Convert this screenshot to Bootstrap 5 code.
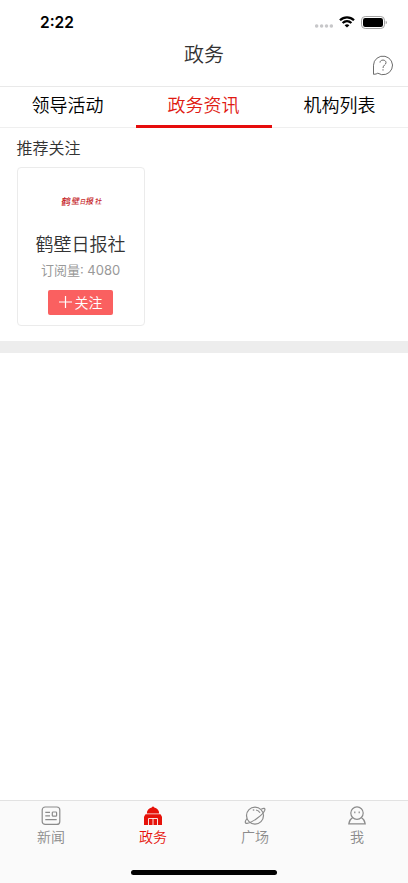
<!DOCTYPE html>
<html lang="zh-CN">
<head>
<meta charset="utf-8">
<meta name="viewport" content="width=device-width, initial-scale=1">
<title>政务</title>
<link href="https://cdn.jsdelivr.net/npm/bootstrap@5.3.0/dist/css/bootstrap.min.css" rel="stylesheet">
<style>
body{font-family:Inter,"Noto Sans CJK SC",sans-serif;font-weight:350;color:#333;background:#fff;height:883px;overflow:hidden}
.status-bar{height:44px;padding:0 21px 0 40px}
.clock{font-size:15.5px;font-weight:600;color:#000;line-height:44px;padding-top:1px}
.status-icons{gap:6px}
.top-bar{height:43px;border-bottom:1px solid #e9e9e9}
.page-title{font-size:20px;line-height:22px;padding-left:20px;font-weight:350}
.side-slot{width:20px;margin-right:15px}
.topic-tabs{height:41px;border-bottom:1px solid #efefef}
.topic-tabs .nav-link{height:41px;padding:0 1px 0 0;border-radius:0;font-size:18px;line-height:37px;color:#000;border-bottom:3px solid transparent}
.topic-tabs .nav-link.active{color:#df1a12;border-color:#e60c0c}
.follow-area{height:225px;padding:0 16.5px;border-bottom:12px solid #ededed}
.follow-title{font-size:16px;line-height:40px;height:39px;font-weight:350}
.press-card{width:128px;height:159px;border:1px solid #ebebeb;border-radius:4px}
.press-logo{height:67px}
.press-name{font-size:18px;line-height:20px;height:18px}
.press-count{font-size:13px;line-height:17px;height:15px;color:#999;font-weight:400;margin-top:9px}
.btn-follow{width:65px;height:25px;margin-top:13px;border-radius:2px;background:#fa6060;color:#fff;font-size:14px;font-weight:350;line-height:14px;gap:3px}
.bottom-nav{height:83px;background:#fafafa;border-top:1px solid #e2e2e2}
.bottom-nav .nav-link{padding:4px 0 0;color:#8b8b8b;font-size:14px;line-height:21px}
.bottom-nav .nav-link.active{color:#e6120a}
.home-bar{width:146px;height:5px;background:#000;margin-bottom:8px}
</style>
<script src="https://cdn.jsdelivr.net/npm/bootstrap@5.3.0/dist/js/bootstrap.bundle.min.js"></script>
</head>
<body class="d-flex flex-column">
<header>
  <div class="status-bar d-flex align-items-center justify-content-between">
    <div class="clock">2:22</div>
    <div class="status-icons d-flex align-items-center">
      <svg width="18" height="12" viewBox="0 0 18 12" fill="#c7c7c9"><circle cx="1.7" cy="10" r="1.75"/><circle cx="6.6" cy="10" r="1.75"/><circle cx="11.5" cy="10" r="1.75"/><circle cx="16.3" cy="10" r="1.75"/></svg>
      <svg width="16" height="12" viewBox="0 0 16 12" fill="none" stroke="#000" stroke-width="2.3"><path d="M1 4.2C5 .3 11 .3 15 4.2M3.6 7C6.2 4.6 9.8 4.6 12.4 7"/><path d="M8 11.6 5.6 9.2Q8 7.2 10.4 9.2Z" fill="#000" stroke="none"/></svg>
      <svg width="26" height="13" viewBox="0 0 26 13"><rect x=".5" y=".5" width="23" height="12" rx="3.7" fill="none" stroke="#a3a3a3"/><rect x="2" y="2" width="20" height="9" rx="2.2"/><path d="M24.7 4.7q1.3.6 1.3 1.8t-1.3 1.8z" fill="#a3a3a3"/></svg>
    </div>
  </div>
  <div class="top-bar d-flex justify-content-between">
    <span class="side-slot"></span>
    <h1 class="page-title m-0 p-0">政务</h1>
    <a href="#" class="side-slot pt-2" aria-label="帮助"><svg class="d-block" width="21" height="24" viewBox="0.5 -3 21 24" fill="none" stroke="#6c6c6c"><path d="M1 19.3V10.2A9.500 9.300 0 1 1 5.300 18.200Q4 19.300 1 19.300Z"/><path d="M7.500 7.600C7.500 4.200 13.500 4.200 13.500 7.700 13.500 9.900 10.500 10 10.500 13M10.500 14.200v1.400"/></svg></a>
  </div>
</header>
<nav class="topic-tabs nav nav-justified flex-nowrap">
  <a class="nav-link w-100" href="#">领导活动</a>
  <a class="nav-link w-100 active" href="#">政务资讯</a>
  <a class="nav-link w-100" href="#">机构列表</a>
</nav>
<main class="flex-grow-1">
  <section class="follow-area">
    <h2 class="follow-title m-0">推荐关注</h2>
    <article class="press-card d-flex flex-column align-items-center">
      <div class="press-logo d-flex align-items-center">
        <svg width="48" height="20" viewBox="0 0 48 20" fill="#c51d27" font-family="Noto Sans CJK SC, sans-serif" font-weight="500"><g transform="translate(3 0) skewX(-10)"><text x="3" y="13" font-size="9.500">鹤</text><text x="13.500" y="12.500" font-size="8">壁</text><text x="21.500" y="12" font-size="6">日</text><text x="27.500" y="12.500" font-size="8">报</text><text x="36.500" y="12" font-size="7">社</text></g></svg>
      </div>
      <div class="press-name">鹤壁日报社</div>
      <div class="press-count">订阅量: 4080</div>
      <button class="btn btn-follow border-0 p-0 d-flex align-items-center justify-content-center" type="button"><svg width="13" height="13" viewBox="0 0 13 13" stroke="#fff" stroke-width="1.200"><path d="M0 6h13M6.500 0v12"/></svg><span>关注</span></button>
    </article>
  </section>
</main>
<footer class="bottom-nav d-flex flex-column justify-content-between align-items-center">
  <nav class="nav nav-justified flex-nowrap w-100">
    <a class="nav-link w-100 d-flex flex-column align-items-center" href="#"><svg width="22" height="21" viewBox="0 0 22 21" fill="none" stroke="currentColor" stroke-width="1.200"><rect x="2.200" y="2" width="17.600" height="17.400" rx="3"/><rect x="12.300" y="7" width="4.300" height="4.200" rx=".8"/><path d="M5.300 7.300H10M5.300 10.800H10M5.300 14.700h11.400"/></svg>新闻</a>
    <a class="nav-link active w-100 d-flex flex-column align-items-center" href="#"><svg width="22" height="21" viewBox="0 0 22 21" fill="currentColor"><path d="M4.800 8.600C4.800 5 7 3 9.700 2.500L11 1.200l1.300 1.300C15 3 17.200 5 17.200 8.600Z"/><path d="M3.500 9.200h15l1.500 2.600V20H2v-8.200Z"/><path d="M6.500 20v-6.500h9V20M11 13.500V20" fill="none" stroke="#fafafa" stroke-width=".9"/></svg>政务</a>
    <a class="nav-link w-100 d-flex flex-column align-items-center" href="#"><svg width="22" height="21" viewBox="0 0 22 21" fill="none" stroke="currentColor" stroke-width="1.200"><circle cx="11" cy="10.600" r="8.500"/><path d="M17.300 4C20 3 21.300 3.100 20.800 5.200 19.500 9.500 8.500 17.500 3 18.400.4 18.300 1 16 3 13.700M8.800 5.200l1.500-.3M12 5q2.500.4 4 2.800"/></svg>广场</a>
    <a class="nav-link w-100 d-flex flex-column align-items-center" href="#"><svg width="22" height="21" viewBox="0 0 22 21" fill="none" stroke="currentColor" stroke-width="1.200"><circle cx="11" cy="8.100" r="6.200"/><path d="M6.500 12.700Q3.300 14.500 2.800 18.800H19.200Q18.700 14.500 15.500 12.700"/><path d="M8.800 6.600v1.700M13.200 6.600v1.700"/></svg>我</a>
  </nav>
  <div class="home-bar rounded-pill"></div>
</footer>
</body>
</html>
